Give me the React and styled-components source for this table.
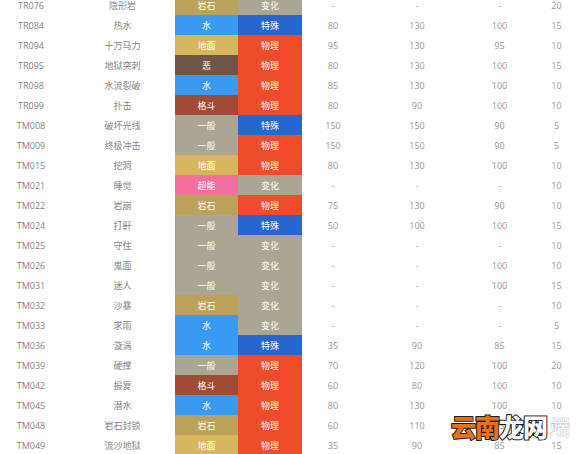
import styled, { createGlobalStyle } from 'styled-components';

const Global = createGlobalStyle`
  html, body {
    margin: 0;
    padding: 0;
    background: #fff;
    overflow: hidden;
  }
  body {
    font-family: "Open Sans", "Noto Sans CJK SC", sans-serif;
  }
`

const COLORS = {
    岩石: '#bba15a',
    水: '#3a9af2',
    地面: '#d8b65d',
    恶: '#6f5646',
    格斗: '#a24a35',
    一般: '#aba593',
    超能: '#f26fa0',
    特殊: '#2567cf',
    物理: '#ef4c2c',
    变化: '#aba593',
}

const rows = [
    ['TR076', '隐形岩', '岩石', '变化', '-', '-', '-', '20'],
    ['TR084', '热水', '水', '特殊', '80', '130', '100', '15'],
    ['TR094', '十万马力', '地面', '物理', '95', '130', '95', '10'],
    ['TR095', '地狱突刺', '恶', '物理', '80', '130', '100', '15'],
    ['TR098', '水流裂破', '水', '物理', '85', '130', '100', '10'],
    ['TR099', '扑击', '格斗', '物理', '80', '90', '100', '10'],
    ['TM008', '破坏光线', '一般', '特殊', '150', '150', '90', '5'],
    ['TM009', '终极冲击', '一般', '物理', '150', '150', '90', '5'],
    ['TM015', '挖洞', '地面', '物理', '80', '130', '100', '10'],
    ['TM021', '睡觉', '超能', '变化', '-', '-', '-', '10'],
    ['TM022', '岩崩', '岩石', '物理', '75', '130', '90', '10'],
    ['TM024', '打鼾', '一般', '特殊', '50', '100', '100', '15'],
    ['TM025', '守住', '一般', '变化', '-', '-', '-', '10'],
    ['TM026', '鬼面', '一般', '变化', '-', '-', '100', '10'],
    ['TM031', '迷人', '一般', '变化', '-', '-', '100', '15'],
    ['TM032', '沙暴', '岩石', '变化', '-', '-', '-', '10'],
    ['TM033', '求雨', '水', '变化', '-', '-', '-', '5'],
    ['TM036', '漩涡', '水', '特殊', '35', '90', '85', '15'],
    ['TM039', '硬撑', '一般', '物理', '70', '120', '100', '20'],
    ['TM042', '报复', '格斗', '物理', '60', '80', '100', '10'],
    ['TM045', '潜水', '水', '物理', '80', '130', '100', '10'],
    ['TM048', '岩石封锁', '岩石', '物理', '60', '110', '95', '15'],
    ['TM049', '流沙地狱', '地面', '物理', '35', '90', '85', '15'],
]

const Page = styled.div`
    position: relative;
    width: 584px;
    height: 454px;
    overflow: hidden;
`

const Table = styled.div`
    margin-top: -5px;
    display: flex;
    flex-direction: column;
`

const Row = styled.div`
    display: grid;
    grid-template-columns: 58px 117px 63px 64px 62px 106px 59px 55px;
    height: 20px;
`

const Cell = styled.div`
    display: flex;
    align-items: center;
    justify-content: center;
    font-size: 9px;
    color: ${p => p.$dark ? '#858585' : '#999'};
    padding-left: ${p => p.$shift || 0}px;
    white-space: nowrap;
`

const Tag = styled.div`
    display: flex;
    align-items: center;
    justify-content: center;
    font-size: 9px;
    color: #fff;
    background: ${p => COLORS[p.$kind]};
`

const Watermark = styled.div`
    position: absolute;
    left: 451px;
    top: 408px;
    display: flex;
    align-items: center;
    font-family: "Noto Sans CJK SC", sans-serif;
    font-weight: 900;
    font-size: 25px;
    letter-spacing: -1px;
    span {
        -webkit-text-stroke: 2px #1d1d1d;
        paint-order: stroke fill;
    }
`

const Mark = styled.span`
    color: ${p => p.$c};
`

const Faint = styled.span`
    margin-left: 3px;
    font-size: 20px;
    font-weight: 400;
    color: #fff;
    -webkit-text-stroke: 1px #c8c8c8 !important;
`

export default function App() {
    return (
        <>
            <Global />
            <Page>
                <Table>
                    {rows.map(r => (
                        <Row key={r[0]}>
                            <Cell $dark $shift={4}>{r[0]}</Cell>
                            <Cell $dark $shift={12}>{r[1]}</Cell>
                            <Tag $kind={r[2]}>{r[2]}</Tag>
                            <Tag $kind={r[3]}>{r[3]}</Tag>
                            <Cell>{r[4]}</Cell>
                            <Cell>{r[5]}</Cell>
                            <Cell>{r[6]}</Cell>
                            <Cell>{r[7]}</Cell>
                        </Row>
                    ))}
                </Table>
                <Watermark>
                    <Mark $c="#e8701a">云南</Mark>
                    <Mark $c="#fff">龙网</Mark>
                    <Faint>端</Faint>
                </Watermark>
            </Page>
        </>
    )
}
